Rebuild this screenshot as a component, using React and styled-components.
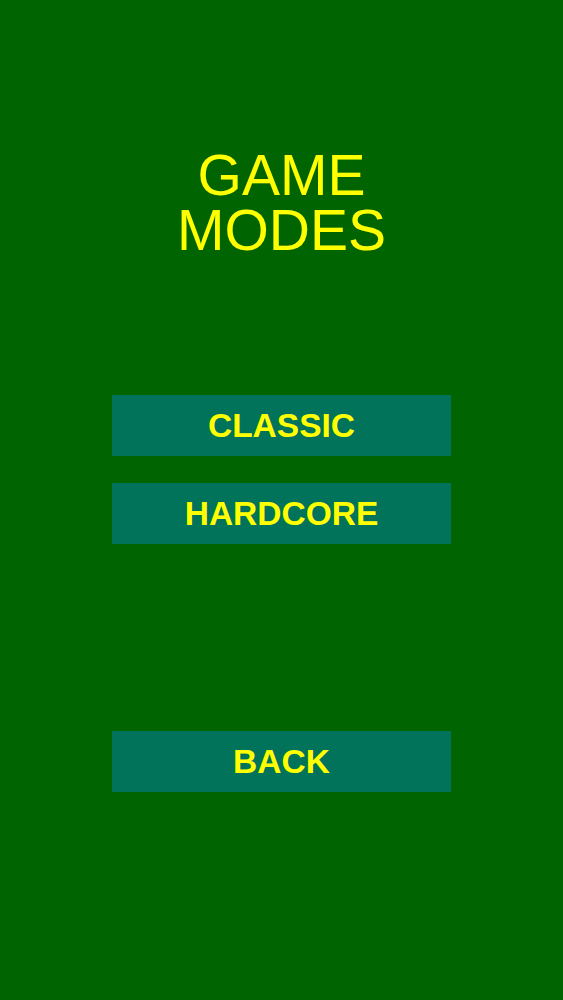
import React from 'react';
import styled, { createGlobalStyle } from 'styled-components';

const GlobalStyle = createGlobalStyle`
  html, body {
    margin: 0;
    padding: 0;
    background: #006400;
  }
  * {
    box-sizing: border-box;
  }
`;

const Screen = styled.div`
  width: 100%;
  min-height: 1000px;
  background: #006400;
  display: flex;
  flex-direction: column;
  align-items: center;
  padding-top: 148px;
  font-family: 'Liberation Sans', Arial, sans-serif;
`;

const Title = styled.h1`
  margin: 0;
  color: #ffff00;
  font-size: 57px;
  font-weight: 400;
  text-align: center;
  display: flex;
  flex-direction: column;
  align-items: center;
`;

const TitleLine = styled.span`
  display: block;
  height: 55px;
  line-height: 55px;
`;

const Menu = styled.div`
  display: flex;
  flex-direction: column;
  gap: 27px;
  margin-top: 137px;
`;

const MenuButton = styled.button`
  width: 339px;
  height: 61px;
  margin-top: ${({ $offset }) => $offset || 0}px;
  border: none;
  background: #00735a;
  color: #ffff00;
  font-family: inherit;
  font-size: 33.5px;
  font-weight: 700;
  display: flex;
  align-items: center;
  justify-content: center;
  cursor: pointer;
  padding: 0;
`;

const App = () => {
  return (
    <>
      <GlobalStyle />
      <Screen>
        <Title>
          <TitleLine>GAME</TitleLine>
          <TitleLine>MODES</TitleLine>
        </Title>
        <Menu>
          <MenuButton>CLASSIC</MenuButton>
          <MenuButton>HARDCORE</MenuButton>
          <MenuButton $offset={160}>BACK</MenuButton>
        </Menu>
      </Screen>
    </>
  );
};

export default App;
